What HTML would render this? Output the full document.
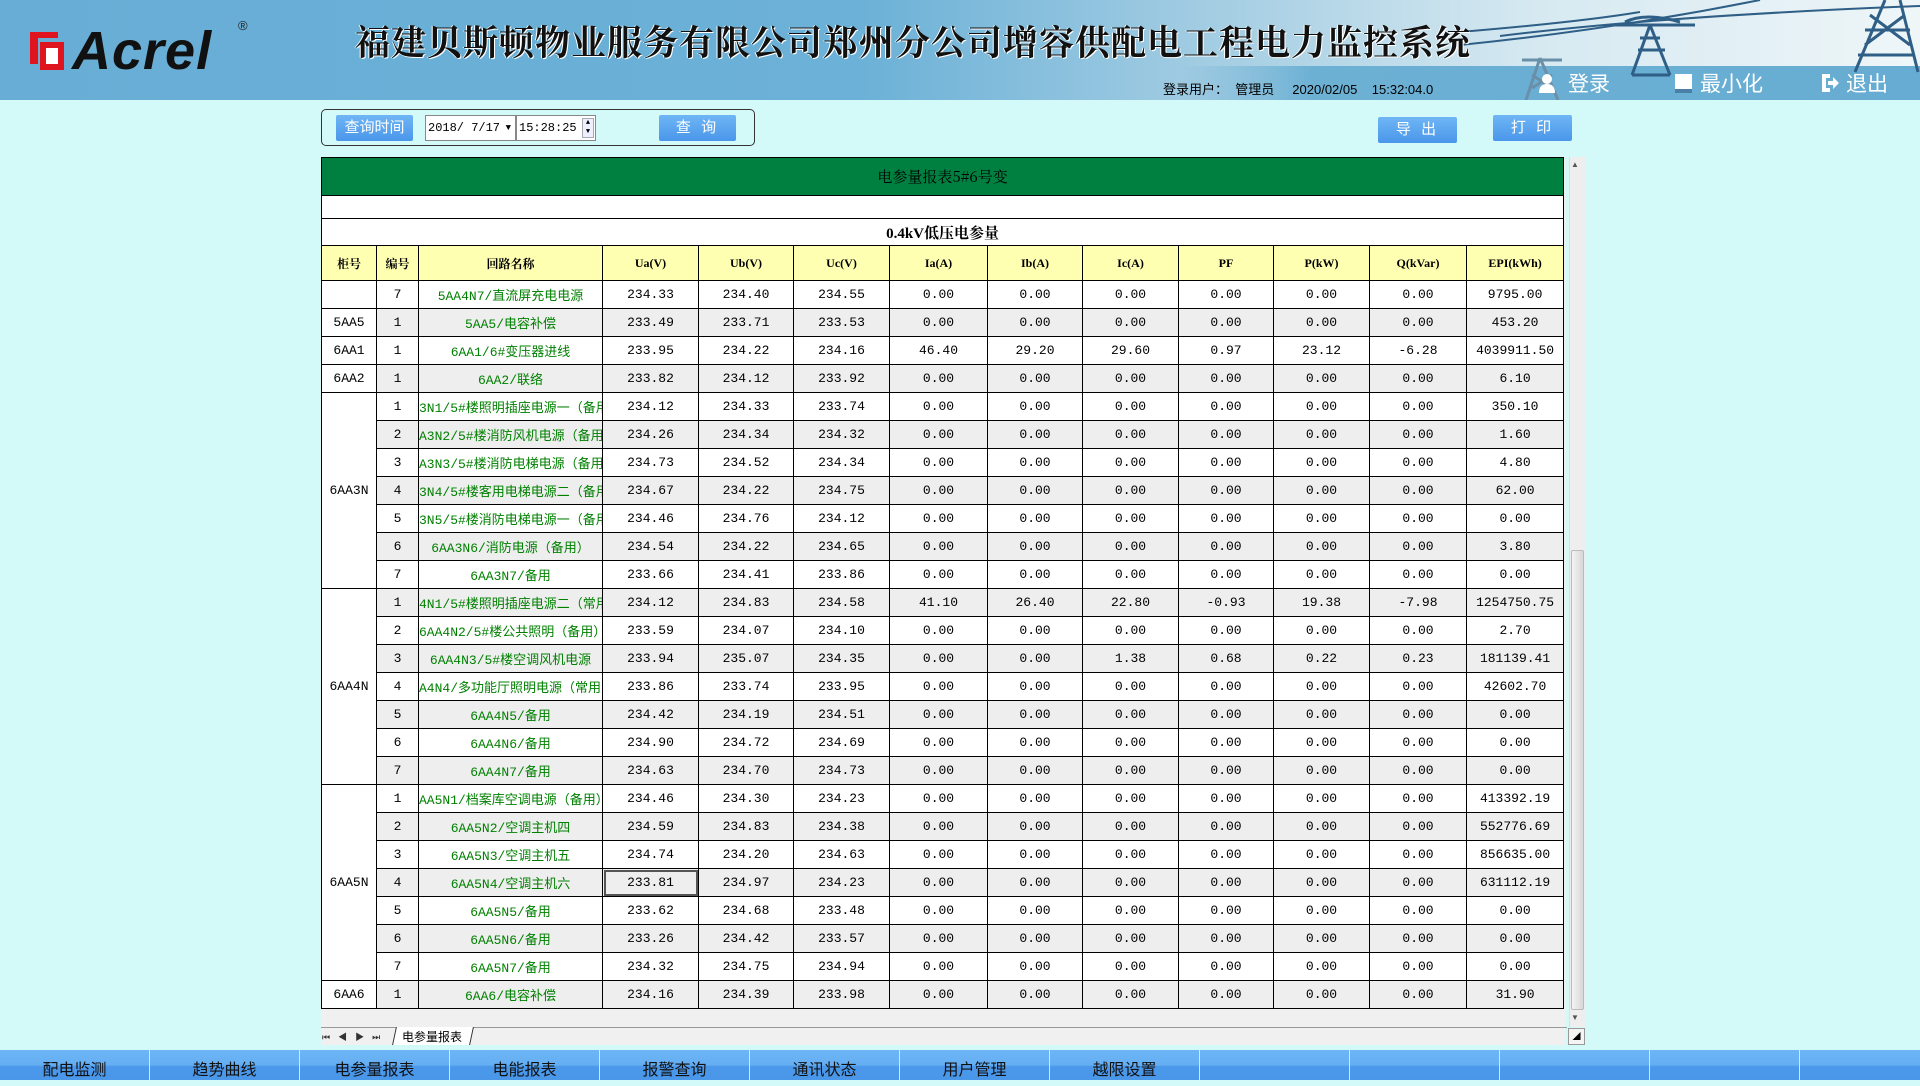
<!DOCTYPE html>
<html><head><meta charset="utf-8">
<style>
*{margin:0;padding:0;box-sizing:border-box}
body{width:1920px;height:1080px;overflow:hidden;background:#d4f9f9;font-family:"Liberation Sans","Noto Sans CJK SC",sans-serif;position:relative}
#hdr{position:absolute;left:0;top:0;width:1920px;height:100px;background:linear-gradient(90deg,#67add5 0%,#6cb1d7 45%,#a9d0e4 65%,#d6e9f1 80%,#eef6f8 100%);overflow:hidden}
#band{position:absolute;left:1180px;top:66px;width:740px;height:34px;background:linear-gradient(90deg,rgba(108,176,214,0) 0%,#6cb0d4 18%,#67acd2 100%)}
.title{position:absolute;left:355px;top:16px;font:bold 35px "Noto Serif CJK SC",serif;color:#111;letter-spacing:1px;text-shadow:1px 1px 0 #fff,-1px 0 0 #fff;white-space:nowrap}
.logo{position:absolute;left:72px;top:20px;font:italic bold 54px "Liberation Sans",sans-serif;color:#111;letter-spacing:1px}
.user{position:absolute;left:1163px;top:79px;font-size:13px;color:#000;white-space:nowrap;font-family:"Liberation Sans","Noto Sans CJK SC",sans-serif}
.hb{position:absolute;top:68px;color:#fff;font-size:21px;white-space:nowrap;font-family:"Noto Sans CJK SC",sans-serif}
.btn{position:absolute;background:linear-gradient(#6fb6f5,#4a96ea);color:#fff;font-size:15px;text-align:center;border-radius:2px;letter-spacing:3px}
#qbox{position:absolute;left:321px;top:109px;width:434px;height:37px;border:1px solid #333;border-radius:5px}
.inp{position:absolute;background:#fff;border:1px solid #888;font:12px "Liberation Mono","Noto Sans CJK SC",monospace;line-height:24px;padding-left:2px;white-space:nowrap}
table{position:absolute;left:321px;top:157px;border-collapse:collapse;table-layout:fixed;width:1242px;font:13px "Liberation Mono","Noto Sans CJK SC",monospace}
td{border:1px solid #000;text-align:center;white-space:nowrap;overflow:hidden;height:28px;background:#fff;color:#000}
tr.g td{background:#eeeeee}
tr.g td.c,td.c{background:#fff}
td.n{color:#008000}
tr.h td{background:#ffffb2;font-weight:bold;font-family:"Liberation Serif","Noto Serif CJK SC",serif;font-size:12px;height:35px}
#nav{position:absolute;left:0;top:1050px;width:1920px;height:30px;display:flex}
#nav div{width:150px;flex:none;height:30px;border-right:1px solid #cfe8ff;background:linear-gradient(#6db5f6 0%,#64aef2 50%,#4b98ea 55%,#4a97ea 100%);font-size:16px;color:#111;text-align:center;line-height:36px;font-family:"Noto Sans CJK SC",sans-serif}
</style></head><body>
<div id="hdr">
<div id="band"></div>
<svg style="position:absolute;left:1460px;top:0" width="460" height="100" viewBox="0 0 460 100">
<g stroke="#2f5f86" stroke-width="3" fill="none">
<path d="M0 32 Q120 22 180 12 M0 45 Q150 30 300 0 M40 36 Q200 16 460 6" stroke-width="2"/>
<path d="M80 58 L66 100 M80 58 L98 100 M62 60 L102 60 M72 75 L92 88 M92 75 L72 88" stroke="#6a8fa8"/>
<path d="M190 25 L172 75 M190 25 L210 75 M150 25 L235 25 M178 50 L205 50 M172 75 L210 75 M180 38 L200 38 M165 22 Q185 12 220 22"/>
<path d="M425 0 L395 72 M440 0 L458 72 M405 30 L450 30 M398 55 L455 55 M410 15 L450 45 M445 15 L405 45"/>
</g></svg>
<svg style="position:absolute;left:28px;top:30px" width="44" height="42" viewBox="0 0 44 42"><path d="M2 2 H30 V8 H10 V34 H2 Z" fill="#e0141e"/><path d="M12 12 H36 V40 H12 Z" fill="#e0141e"/><path d="M18 18 H30 V34 H18 Z" fill="#fff"/></svg>
<div class="logo">Acrel</div>
<div style="position:absolute;left:238px;top:18px;font-size:13px;color:#222">®</div>
<div class="title">福建贝斯顿物业服务有限公司郑州分公司增容供配电工程电力监控系统</div>
<div class="user">登录用户：&nbsp;&nbsp;管理员&nbsp;&nbsp;&nbsp;&nbsp;&nbsp;2020/02/05&nbsp;&nbsp;&nbsp;&nbsp;15:32:04.0</div>
<svg style="position:absolute;left:1538px;top:73px" width="18" height="20" viewBox="0 0 18 20"><circle cx="9" cy="6" r="5" fill="#fff"/><path d="M1 20 Q1 11 9 11 Q17 11 17 20 Z" fill="#fff"/></svg>
<div class="hb" style="left:1568px">登录</div>
<div style="position:absolute;left:1675px;top:74px;width:17px;height:19px;background:#fff;border-bottom:4px solid #4a7fa8"></div>
<div class="hb" style="left:1700px">最小化</div>
<svg style="position:absolute;left:1820px;top:73px" width="20" height="20" viewBox="0 0 20 20"><path d="M2 1 H10 V5 H6 V15 H10 V19 H2 Z" fill="#fff"/><path d="M8 8 H13 V4 L19 10 L13 16 V12 H8 Z" fill="#fff"/></svg>
<div class="hb" style="left:1846px">退出</div>
</div>

<div id="qbox"></div>
<div class="btn" style="left:336px;top:115px;width:77px;height:26px;line-height:26px;letter-spacing:0">查询时间</div>
<div class="inp" style="left:425px;top:115px;width:91px;height:26px">2018/ 7/17<span style="position:absolute;right:4px;top:0;font-size:9px">▼</span></div>
<div class="inp" style="left:516px;top:115px;width:80px;height:26px">15:28:25<span style="position:absolute;right:1px;top:2px;width:12px;height:20px;border:1px solid #aaa;background:#eef;font-size:7px;line-height:9px;text-align:center">▲<br>▼</span></div>
<div class="btn" style="left:659px;top:115px;width:77px;height:26px;line-height:26px">查 询</div>
<div class="btn" style="left:1378px;top:117px;width:79px;height:26px;line-height:26px">导 出</div>
<div class="btn" style="left:1493px;top:115px;width:79px;height:26px;line-height:26px">打 印</div>

<div style="position:absolute;left:321px;top:157px;width:1244px;height:888px;background:#f0f0f0"></div>
<table>
<colgroup><col style="width:55px"><col style="width:42px"><col style="width:184px"><col style="width:96px"><col style="width:95px"><col style="width:96px"><col style="width:98px"><col style="width:95px"><col style="width:96px"><col style="width:95px"><col style="width:96px"><col style="width:97px"><col style="width:97px"></colgroup>
<tr><td colspan="13" style="background:#008040;height:38px;font:15px 'Noto Serif CJK SC',serif;color:#000">电参量报表5#6号变</td></tr>
<tr><td colspan="13" style="height:23px"></td></tr>
<tr><td colspan="13" style="height:27px;font:bold 15px 'Liberation Serif','Noto Serif CJK SC',serif">0.4kV低压电参量</td></tr>
<tr class="h"><td>柜号</td><td>编号</td><td>回路名称</td><td>Ua(V)</td><td>Ub(V)</td><td>Uc(V)</td><td>Ia(A)</td><td>Ib(A)</td><td>Ic(A)</td><td>PF</td><td>P(kW)</td><td>Q(kVar)</td><td>EPI(kWh)</td></tr>
<tr><td class="c"></td><td>7</td><td class="n">5AA4N7/直流屏充电电源</td><td>234.33</td><td>234.40</td><td>234.55</td><td>0.00</td><td>0.00</td><td>0.00</td><td>0.00</td><td>0.00</td><td>0.00</td><td>9795.00</td></tr>
<tr class="g"><td class="c">5AA5</td><td>1</td><td class="n">5AA5/电容补偿</td><td>233.49</td><td>233.71</td><td>233.53</td><td>0.00</td><td>0.00</td><td>0.00</td><td>0.00</td><td>0.00</td><td>0.00</td><td>453.20</td></tr>
<tr><td class="c">6AA1</td><td>1</td><td class="n">6AA1/6#变压器进线</td><td>233.95</td><td>234.22</td><td>234.16</td><td>46.40</td><td>29.20</td><td>29.60</td><td>0.97</td><td>23.12</td><td>-6.28</td><td>4039911.50</td></tr>
<tr class="g"><td class="c">6AA2</td><td>1</td><td class="n">6AA2/联络</td><td>233.82</td><td>234.12</td><td>233.92</td><td>0.00</td><td>0.00</td><td>0.00</td><td>0.00</td><td>0.00</td><td>0.00</td><td>6.10</td></tr>
<tr><td class="c" rowspan="7">6AA3N</td><td>1</td><td class="n" style="text-align:left">3N1/5#楼照明插座电源一（备用</td><td>234.12</td><td>234.33</td><td>233.74</td><td>0.00</td><td>0.00</td><td>0.00</td><td>0.00</td><td>0.00</td><td>0.00</td><td>350.10</td></tr>
<tr class="g"><td>2</td><td class="n" style="text-align:left">A3N2/5#楼消防风机电源（备用</td><td>234.26</td><td>234.34</td><td>234.32</td><td>0.00</td><td>0.00</td><td>0.00</td><td>0.00</td><td>0.00</td><td>0.00</td><td>1.60</td></tr>
<tr><td>3</td><td class="n" style="text-align:left">A3N3/5#楼消防电梯电源（备用</td><td>234.73</td><td>234.52</td><td>234.34</td><td>0.00</td><td>0.00</td><td>0.00</td><td>0.00</td><td>0.00</td><td>0.00</td><td>4.80</td></tr>
<tr class="g"><td>4</td><td class="n" style="text-align:left">3N4/5#楼客用电梯电源二（备用</td><td>234.67</td><td>234.22</td><td>234.75</td><td>0.00</td><td>0.00</td><td>0.00</td><td>0.00</td><td>0.00</td><td>0.00</td><td>62.00</td></tr>
<tr><td>5</td><td class="n" style="text-align:left">3N5/5#楼消防电梯电源一（备用</td><td>234.46</td><td>234.76</td><td>234.12</td><td>0.00</td><td>0.00</td><td>0.00</td><td>0.00</td><td>0.00</td><td>0.00</td><td>0.00</td></tr>
<tr class="g"><td>6</td><td class="n">6AA3N6/消防电源（备用）</td><td>234.54</td><td>234.22</td><td>234.65</td><td>0.00</td><td>0.00</td><td>0.00</td><td>0.00</td><td>0.00</td><td>0.00</td><td>3.80</td></tr>
<tr><td>7</td><td class="n">6AA3N7/备用</td><td>233.66</td><td>234.41</td><td>233.86</td><td>0.00</td><td>0.00</td><td>0.00</td><td>0.00</td><td>0.00</td><td>0.00</td><td>0.00</td></tr>
<tr class="g"><td class="c" rowspan="7">6AA4N</td><td>1</td><td class="n" style="text-align:left">4N1/5#楼照明插座电源二（常用</td><td>234.12</td><td>234.83</td><td>234.58</td><td>41.10</td><td>26.40</td><td>22.80</td><td>-0.93</td><td>19.38</td><td>-7.98</td><td>1254750.75</td></tr>
<tr><td>2</td><td class="n" style="text-align:left">6AA4N2/5#楼公共照明（备用）</td><td>233.59</td><td>234.07</td><td>234.10</td><td>0.00</td><td>0.00</td><td>0.00</td><td>0.00</td><td>0.00</td><td>0.00</td><td>2.70</td></tr>
<tr class="g"><td>3</td><td class="n">6AA4N3/5#楼空调风机电源</td><td>233.94</td><td>235.07</td><td>234.35</td><td>0.00</td><td>0.00</td><td>1.38</td><td>0.68</td><td>0.22</td><td>0.23</td><td>181139.41</td></tr>
<tr><td>4</td><td class="n" style="text-align:left">A4N4/多功能厅照明电源（常用</td><td>233.86</td><td>233.74</td><td>233.95</td><td>0.00</td><td>0.00</td><td>0.00</td><td>0.00</td><td>0.00</td><td>0.00</td><td>42602.70</td></tr>
<tr class="g"><td>5</td><td class="n">6AA4N5/备用</td><td>234.42</td><td>234.19</td><td>234.51</td><td>0.00</td><td>0.00</td><td>0.00</td><td>0.00</td><td>0.00</td><td>0.00</td><td>0.00</td></tr>
<tr><td>6</td><td class="n">6AA4N6/备用</td><td>234.90</td><td>234.72</td><td>234.69</td><td>0.00</td><td>0.00</td><td>0.00</td><td>0.00</td><td>0.00</td><td>0.00</td><td>0.00</td></tr>
<tr class="g"><td>7</td><td class="n">6AA4N7/备用</td><td>234.63</td><td>234.70</td><td>234.73</td><td>0.00</td><td>0.00</td><td>0.00</td><td>0.00</td><td>0.00</td><td>0.00</td><td>0.00</td></tr>
<tr><td class="c" rowspan="7">6AA5N</td><td>1</td><td class="n" style="text-align:left">AA5N1/档案库空调电源（备用）</td><td>234.46</td><td>234.30</td><td>234.23</td><td>0.00</td><td>0.00</td><td>0.00</td><td>0.00</td><td>0.00</td><td>0.00</td><td>413392.19</td></tr>
<tr class="g"><td>2</td><td class="n">6AA5N2/空调主机四</td><td>234.59</td><td>234.83</td><td>234.38</td><td>0.00</td><td>0.00</td><td>0.00</td><td>0.00</td><td>0.00</td><td>0.00</td><td>552776.69</td></tr>
<tr><td>3</td><td class="n">6AA5N3/空调主机五</td><td>234.74</td><td>234.20</td><td>234.63</td><td>0.00</td><td>0.00</td><td>0.00</td><td>0.00</td><td>0.00</td><td>0.00</td><td>856635.00</td></tr>
<tr class="g"><td>4</td><td class="n">6AA5N4/空调主机六</td><td style="outline:2px solid #555;outline-offset:-3px">233.81</td><td>234.97</td><td>234.23</td><td>0.00</td><td>0.00</td><td>0.00</td><td>0.00</td><td>0.00</td><td>0.00</td><td>631112.19</td></tr>
<tr><td>5</td><td class="n">6AA5N5/备用</td><td>233.62</td><td>234.68</td><td>233.48</td><td>0.00</td><td>0.00</td><td>0.00</td><td>0.00</td><td>0.00</td><td>0.00</td><td>0.00</td></tr>
<tr class="g"><td>6</td><td class="n">6AA5N6/备用</td><td>233.26</td><td>234.42</td><td>233.57</td><td>0.00</td><td>0.00</td><td>0.00</td><td>0.00</td><td>0.00</td><td>0.00</td><td>0.00</td></tr>
<tr><td>7</td><td class="n">6AA5N7/备用</td><td>234.32</td><td>234.75</td><td>234.94</td><td>0.00</td><td>0.00</td><td>0.00</td><td>0.00</td><td>0.00</td><td>0.00</td><td>0.00</td></tr>
<tr class="g"><td class="c">6AA6</td><td>1</td><td class="n">6AA6/电容补偿</td><td>234.16</td><td>234.39</td><td>233.98</td><td>0.00</td><td>0.00</td><td>0.00</td><td>0.00</td><td>0.00</td><td>0.00</td><td>31.90</td></tr>
</table>

<div style="position:absolute;left:1569px;top:157px;width:16px;height:870px;background:#eeeeee;border-left:1px solid #ddd"></div>
<div style="position:absolute;left:1571px;top:160px;font-size:8px;color:#555">▲</div>
<div style="position:absolute;left:1571px;top:550px;width:13px;height:460px;background:linear-gradient(90deg,#f4f4f4,#d8d8d8);border:1px solid #bbb;border-radius:2px"></div>
<div style="position:absolute;left:1571px;top:1013px;font-size:8px;color:#555">▼</div>
<div style="position:absolute;left:1568px;top:1028px;width:17px;height:17px;background:#f4f4f4;border:1px solid #999;font-size:8px;text-align:center;line-height:15px">◢</div>
<div style="position:absolute;left:321px;top:1027px;width:1246px;height:1px;background:#999"></div>
<div style="position:absolute;left:322px;top:1030px;font-size:9px;color:#333;letter-spacing:8px">⏮◀▶⏭</div>
<div style="position:absolute;left:394px;top:1027px;width:78px;height:18px;background:#fff;border-left:1px solid #333;border-right:1px solid #333;transform:skewX(-12deg)"></div>
<div style="position:absolute;left:402px;top:1028px;font-size:12px;font-family:'Noto Sans CJK SC',sans-serif">电参量报表</div>

<div id="nav"><div>配电监测</div><div>趋势曲线</div><div>电参量报表</div><div>电能报表</div><div>报警查询</div><div>通讯状态</div><div>用户管理</div><div>越限设置</div><div></div><div></div><div></div><div></div><div></div></div>
</body></html>
